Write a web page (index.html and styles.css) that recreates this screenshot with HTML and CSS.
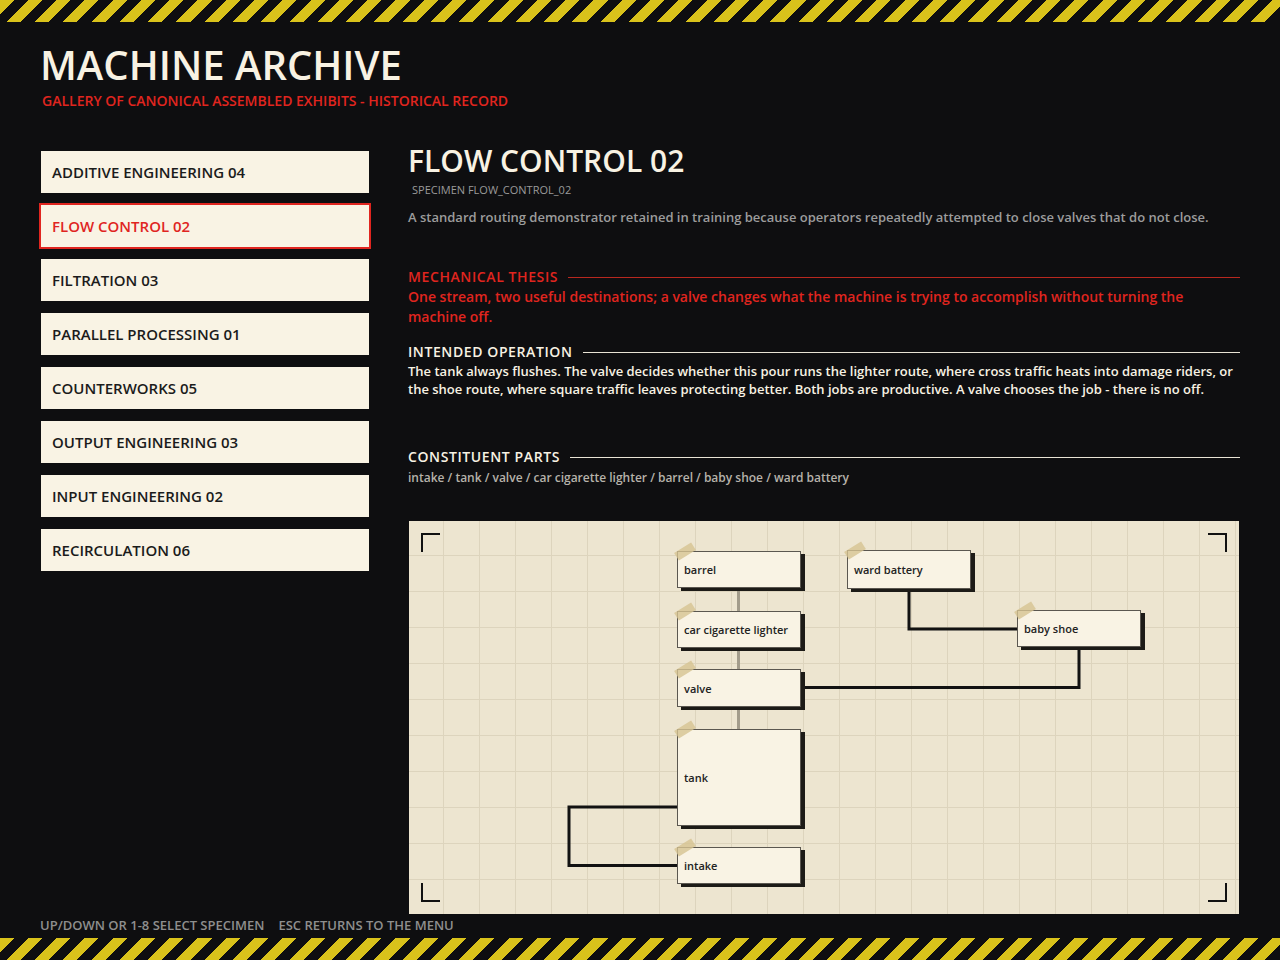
FILE: index.html
```html
<!DOCTYPE html>
<html lang="en">

<head>
    <meta charset="UTF-8">
    <meta name="viewport" content="width=device-width, initial-scale=1.0">
    <title>Machine Archive</title>
    <link rel="stylesheet" href="styles.css">
</head>

<body>

    <div class="hazard"></div>

    <header class="masthead">
        <h1>MACHINE ARCHIVE</h1>
        <p class="tagline">GALLERY OF CANONICAL ASSEMBLED EXHIBITS - HISTORICAL RECORD</p>
    </header>

    <main class="layout">
        <ul class="specimens">
            <li>ADDITIVE ENGINEERING 04</li>
            <li class="active">FLOW CONTROL 02</li>
            <li>FILTRATION 03</li>
            <li>PARALLEL PROCESSING 01</li>
            <li>COUNTERWORKS 05</li>
            <li>OUTPUT ENGINEERING 03</li>
            <li>INPUT ENGINEERING 02</li>
            <li>RECIRCULATION 06</li>
        </ul>

        <section class="exhibit">
            <h2>FLOW CONTROL 02</h2>
            <p class="code">SPECIMEN FLOW_CONTROL_02</p>
            <p class="summary">A standard routing demonstrator retained in training because operators repeatedly attempted to close valves that do not close.</p>

            <div class="section-head thesis-head"><span>MECHANICAL THESIS</span></div>
            <p class="thesis">One stream, two useful destinations; a valve changes what the machine is trying to accomplish without turning the machine off.</p>

            <div class="section-head operation-head"><span>INTENDED OPERATION</span></div>
            <p class="body">The tank always flushes. The valve decides whether this pour runs the lighter route, where cross traffic heats into damage riders, or the shoe route, where square traffic leaves protecting better. Both jobs are productive. A valve chooses the job - there is no off.</p>

            <div class="section-head parts-head"><span>CONSTITUENT PARTS</span></div>
            <p class="parts">intake / tank / valve / car cigarette lighter / barrel / baby shoe / ward battery</p>

            <div class="diagram">
                <span class="corner tl"></span>
                <span class="corner tr"></span>
                <span class="corner bl"></span>
                <span class="corner br"></span>

                <!-- pipes between the parts -->
                <svg class="wires" width="830" height="393" viewBox="0 0 830 393">
                    <path d="M329.5 67 V208" stroke="#a39c8b" stroke-width="3" fill="none" />
                    <path d="M500 68 V108 H608" stroke="#121212" stroke-width="3" fill="none" />
                    <path d="M392 166.5 H670 V126" stroke="#121212" stroke-width="3" fill="none" />
                    <path d="M268 286 H160 V344.5 H268" stroke="#121212" stroke-width="3" fill="none" />
                </svg>

                <div class="part barrel">barrel</div>
                <div class="part lighter">car cigarette lighter</div>
                <div class="part valve">valve</div>
                <div class="part tank">tank</div>
                <div class="part intake">intake</div>
                <div class="part battery">ward battery</div>
                <div class="part shoe">baby shoe</div>
            </div>
        </section>
    </main>

    <footer class="keys">
        <span>UP/DOWN OR 1-8 SELECT SPECIMEN</span>
        <span>ESC RETURNS TO THE MENU</span>
    </footer>

    <div class="hazard bottom"></div>

</body>

</html>
```

FILE: styles.css
```css
* {
    margin: 0;
    padding: 0;
    box-sizing: border-box;
}

body {
    font-family: "Open Sans", "Noto Sans", sans-serif;
    background-color: #0e0e10;
    color: #f8f2e3;
    height: 960px;
    overflow: hidden;
    display: flex;
    flex-direction: column;
}

.hazard {
    height: 22px;
    flex: none;
    background: repeating-linear-gradient(135deg, #d9c21b 0 10px, #0e0e10 10px 20px);
}

.hazard.bottom {
    margin-top: auto;
}

.masthead {
    padding: 22px 40px 0 40px;
}

h1 {
    font-size: 40px;
    line-height: 42px;
    font-weight: 600;
    color: #f8f2e3;
}

.tagline {
    margin-top: 5px;
    padding-left: 2px;
    font-size: 14px;
    line-height: 20px;
    font-weight: 600;
    color: #e0251f;
}

.layout {
    display: grid;
    grid-template-columns: 328px 832px;
    column-gap: 39px;
    align-items: start;
    padding: 34px 0 0 41px;
}

.specimens {
    list-style: none;
    display: flex;
    flex-direction: column;
    gap: 12px;
    padding-top: 6px;
}

.specimens li {
    height: 42px;
    display: flex;
    align-items: center;
    padding-left: 11px;
    padding-bottom: 1px;
    background-color: #f9f3e4;
    color: #1b1b1b;
    font-size: 15px;
    font-weight: 600;
}

.specimens li.active {
    color: #e0251f;
    outline: 2px solid #e0251f;
}

h2 {
    font-size: 30px;
    line-height: 32px;
    font-weight: 600;
    color: #f8f2e3;
}

.code {
    margin-top: 6px;
    padding-left: 4px;
    font-size: 11px;
    line-height: 14px;
    color: #9a9a9a;
}

.summary {
    margin-top: 11px;
    font-size: 13px;
    line-height: 18px;
    font-weight: 600;
    color: #9c9c9c;
}

.section-head {
    display: flex;
    align-items: center;
    font-size: 14px;
    line-height: 20px;
    font-weight: 600;
    letter-spacing: 0.6px;
    color: #f8f2e3;
}

.section-head::after {
    content: "";
    flex: 1;
    height: 1px;
    margin-left: 10px;
    background-color: #e9e3d5;
}

.thesis-head {
    margin-top: 41px;
    color: #e0251f;
}

.thesis-head::after {
    background-color: #b8281f;
}

.thesis {
    font-size: 14px;
    line-height: 20px;
    font-weight: 600;
    color: #e0251f;
}

.operation-head {
    margin-top: 15px;
}

.body {
    font-size: 13px;
    line-height: 18px;
    font-weight: 600;
    color: #f8f2e3;
}

.parts-head {
    margin-top: 49px;
}

.parts {
    margin-top: 2px;
    font-size: 12px;
    line-height: 18px;
    font-weight: 600;
    color: #b6b2aa;
}

/* assembly board */
.diagram {
    position: relative;
    height: 393px;
    margin: 34px 1px 0 1px;
    background-color: #ede5d0;
    background-image:
        linear-gradient(#ddd4bd 1px, transparent 1px),
        linear-gradient(90deg, #ddd4bd 1px, transparent 1px);
    background-size: 36px 36px;
    background-position: 34px 34px;
}

.wires {
    position: absolute;
    left: 0;
    top: 0;
}

.corner {
    position: absolute;
    width: 19px;
    height: 19px;
    border-color: #111;
    border-style: solid;
    border-width: 0;
}

.corner.tl { left: 12px; top: 12px; border-top-width: 2px; border-left-width: 2px; }
.corner.tr { right: 12px; top: 12px; border-top-width: 2px; border-right-width: 2px; }
.corner.bl { left: 12px; bottom: 12px; border-bottom-width: 2px; border-left-width: 2px; }
.corner.br { right: 12px; bottom: 12px; border-bottom-width: 2px; border-right-width: 2px; }

.part {
    position: absolute;
    width: 124px;
    height: 37px;
    display: flex;
    align-items: center;
    padding-left: 6px;
    background-color: #f9f3e4;
    border: 1px solid #5b5750;
    box-shadow: 4px 3px 0 #1d1b17;
    font-size: 11px;
    font-weight: 600;
    color: #222;
}

/* strip of tape holding each card */
.part::after {
    content: "";
    position: absolute;
    left: -3px;
    top: -5px;
    width: 20px;
    height: 9px;
    background-color: rgba(214, 195, 145, 0.8);
    transform: rotate(-32deg);
}

.barrel { left: 268px; top: 30px; }
.lighter { left: 268px; top: 90px; }
.valve { left: 268px; top: 148px; height: 38px; }
.tank { left: 268px; top: 208px; height: 97px; }
.intake { left: 268px; top: 326px; }
.battery { left: 438px; top: 29px; height: 39px; }
.shoe { left: 608px; top: 89px; }

.keys {
    display: flex;
    gap: 14px;
    padding: 2px 0 0 40px;
    font-size: 13px;
    line-height: 18px;
    font-weight: 600;
    color: #8e8e8e;
}
```
